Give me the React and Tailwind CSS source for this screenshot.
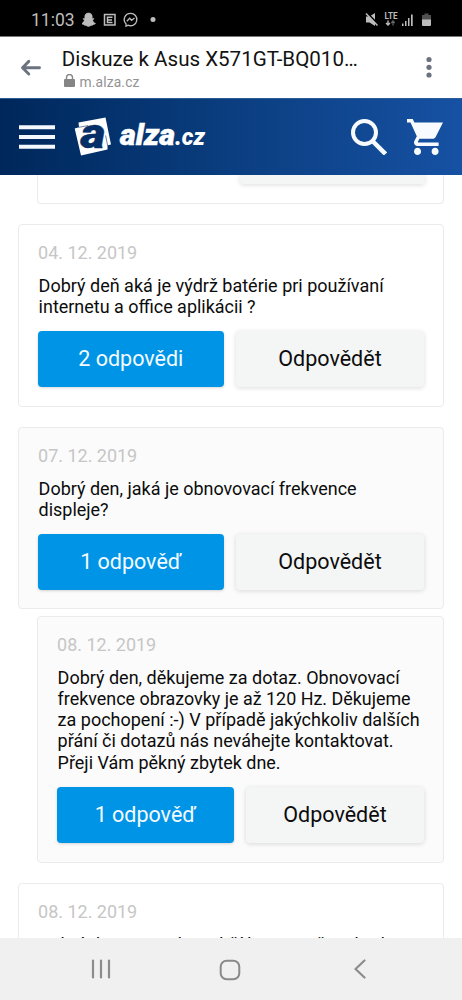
import React from "react";

const cardBase = "box-border rounded border-[1.5px] border-[#ebebeb] pl-[19.5px] pr-[19px]";

function Line({ children, width }) {
  return (
    <svg className="block h-[21.3px] w-full overflow-visible">
      <text x="-0.4" y="16.5" fontSize="18" fill="#0c0c0c" textLength={width} lengthAdjust="spacingAndGlyphs">
        {children}
      </text>
    </svg>
  );
}

function Post({ date, lines, replies, repliesWidth, replyWidth, className }) {
  return (
    <article className={`${cardBase} ${className}`}>
      <time className="-ml-[0.4px] block h-[22px] text-[18px] leading-[21px] tracking-[-0.02px] text-[#c6c6c6]">{date}</time>
      <div className="mt-[10.5px]">
        {lines.map(([text, width]) => (
          <Line key={text} width={width}>{text}</Line>
        ))}
      </div>
      {replies && (
        <div className="-ml-[0.7px] mt-[13.8px] flex justify-between">
          <button className={`h-[56px] rounded bg-[#0094e7] text-[21.5px] text-[#f4fbff] shadow-[0_1px_3px_rgba(0,0,0,0.16)] ${repliesWidth}`}>{replies}</button>
          <button className={`h-[56px] rounded bg-[#f4f5f5] text-[21.5px] text-[#0c0c0c] shadow-[0_1px_5px_rgba(0,0,0,0.14)] ${replyWidth}`}>Odpovědět</button>
        </div>
      )}
    </article>
  );
}

function StatusBar() {
  return (
    <div className="flex h-9 shrink-0 items-center bg-black pl-[31px] pr-[30px] text-[#bdbdbd]">
      <span className="mt-[3px] w-[51px] text-[17.5px] leading-5">11:03</span>
      <svg className="mt-[3px] h-4 w-[75px]" viewBox="0 0 75 16" fill="none">
        <path d="M6.5 1c2.7 0 3.8 1.9 3.7 4v1.8l1.8-.3-1.3 1.8c.5 1.7 1.4 2.7 2.8 3.1-.3.9-1.4 1-2.3 1.1-.3 1-1.2.8-2 .9-.9.2-1.3 1-2.7 1s-1.8-.8-2.7-1c-.8-.1-1.7.1-2-.9-.9-.1-2-.2-2.3-1.1 1.4-.4 2.3-1.4 2.8-3.1L1 6.5l1.8.3V5c-.1-2.1 1-4 3.7-4Z" fill="currentColor" stroke="currentColor" strokeWidth=".6" />
        <path d="M22.5 2.500h10.500v10.500h-10.500zM30.500 5.300h-5v5.200h5M25.500 7.900h4.500" stroke="currentColor" strokeWidth="1.500" />
        <path d="M48.500 1.300a6.200 6.200 0 0 0-4.500 10.500v2.300l2-1a6.200 6.200 0 1 0 2.500-11.800ZM44.800 9.300l2.900-3 1.900 2 2.900-2.200" stroke="currentColor" strokeWidth="1.300" />
        <circle cx="71" cy="7.500" r="2.500" fill="currentColor" />
      </svg>
      <svg className="ml-auto mt-[3px] h-4 w-[67px]" viewBox="0 0 67 16" fill="currentColor">
        <path d="M1 4.500h3.500L10 1v13l-5.500-3.500H1z" />
        <path d="M1.500.5 13.500 12.500" stroke="#000" strokeWidth="1.800" />
        <path d="M1 1.500 12.500 13.500" stroke="currentColor" strokeWidth="1.500" />
        <text x="19.500" y="7" fontSize="8.500" fontWeight="700" textLength="13" lengthAdjust="spacingAndGlyphs">LTE</text>
        <path d="M23 8.500v4.500m-2-2 2 2 2-2" fill="none" stroke="currentColor" strokeWidth="1.400" />
        <path d="M28 13.500v-4.500m-1.700 2 1.700-2 1.700 2" fill="none" stroke="#666" strokeWidth="1.200" />
        <path d="M37 11.500h1.500V14H37zm3-2.500h1.500v5H40zm3-3h1.500v8H43zm3-3.500h1.700V14H46z" />
        <path d="M57 3h2.500V1.500h4V3H66v5h-9z" fill="#505050" />
        <path d="M57 7.500h9v5.500q0 1-1 1h-7q-1 0-1-1z" />
      </svg>
    </div>
  );
}

function BrowserBar() {
  return (
    <div className="flex h-[62px] shrink-0 border-t border-[#777] bg-white">
      <svg className="ml-5 mt-[21px] h-5 w-[22px]" viewBox="0 0 22 20" fill="none" stroke="#6c7380" strokeWidth="2.900" strokeLinecap="round" strokeLinejoin="round">
        <path d="M19.500 9.700H2.800M8.800 3.400l-6.300 6.300 6.300 6.300" />
      </svg>
      <div className="ml-5 mt-[9px] w-[310px]">
        <svg className="block h-[25px] w-full overflow-visible">
          <text x="-0.300" y="20" fontSize="20" fill="#121212" textLength="296" lengthAdjust="spacingAndGlyphs">Diskuze k Asus X571GT-BQ010…</text>
        </svg>
        <div className="flex h-[17px] items-center">
          <svg className="ml-[1.500px] mr-[5px] mt-[2px] h-[13px] w-[11px]" viewBox="0 0 11 13" fill="#858585">
            <path d="M1 5h9q1 0 1 1v6q0 1-1 1H1q-1 0-1-1V6q0-1 1-1Z" />
            <path d="M2.500 6V3.500a3 3 0 0 1 6 0V6" fill="none" stroke="#858585" strokeWidth="1.400" />
          </svg>
          <span className="mt-[4px] text-[13.800px] leading-4 tracking-[0.15px] text-[#929292]">m.alza.cz</span>
        </div>
      </div>
      <svg className="ml-auto mr-[30.500px] mt-[19px] h-[22px] w-[6px]" viewBox="0 0 6 22" fill="#6c7380">
        <circle cx="3" cy="3.500" r="2.600" /><circle cx="3" cy="11.300" r="2.600" /><circle cx="3" cy="19" r="2.600" />
      </svg>
    </div>
  );
}

function SiteHeader() {
  return (
    <header className="flex h-[77px] shrink-0 items-center border-t border-[#2d5b93] bg-linear-to-r from-[#00275b] via-[#0b3e80] to-[#1651a3] pl-[19px] pr-[19px]">
      <svg className="h-[26px] w-9" viewBox="0 0 36 26" fill="#f5f9ff">
        <path d="M0 1.300h36v4H0zM0 11h36v4H0zM0 20.800h36v4H0z" />
      </svg>
      <svg className="ml-[19px] h-10 w-[136px] overflow-visible" viewBox="0 0 136 40" fill="white">
        <path d="M4.500 5.500 31.500.5l5.500 27-3.500.8v4.200L7 38.500.7 11.500l4.300-1.200z" />
        <path d="M4.800 10.300 14 8.600M33.600 28.500l-2-10" stroke="#062f68" strokeWidth=".6" />
        <text x="6.500" y="30.500" fontSize="43" fontWeight="900" fontStyle="italic" fill="#062f68" stroke="#062f68" strokeWidth=".4" textLength="25" lengthAdjust="spacingAndGlyphs">a</text>
        <text x="46" y="28" fontSize="28.500" fontWeight="900" fontStyle="italic" textLength="55" lengthAdjust="spacingAndGlyphs" stroke="white" strokeWidth=".5">alza</text>
        <text x="101" y="28" fontSize="23" fontWeight="900" fontStyle="italic" textLength="30" lengthAdjust="spacingAndGlyphs">.cz</text>
      </svg>
      <svg className="ml-auto h-9 w-9" viewBox="0 0 36 36" fill="none" stroke="#f7fbff">
        <circle cx="13.500" cy="13.500" r="11.500" strokeWidth="4" />
        <path d="M22 22.500 34.500 35" strokeWidth="4.500" />
      </svg>
      <svg className="ml-[20px] h-9 w-9" viewBox="1 2 20.500 20" fill="#f7fbff" preserveAspectRatio="none">
        <path d="M7 18c-1.100 0-1.990.9-1.990 2S5.900 22 7 22s2-.9 2-2-.9-2-2-2zM1 2v2h2l3.600 7.590-1.350 2.450c-.16.280-.25.610-.25.960 0 1.100.9 2 2 2h12v-2H7.420c-.14 0-.25-.110-.25-.250l.03-.120.9-1.630h7.450c.75 0 1.410-.410 1.750-1.030L21.500 4H5.210l-.94-2H1zm16 16c-1.100 0-1.990.9-1.990 2s.89 2 1.990 2 2-.9 2-2-.9-2-2-2z" />
      </svg>
    </header>
  );
}

export default function App() {
  return (
    <div className="flex h-[1000px] w-[462px] flex-col overflow-hidden bg-white font-[Roboto,sans-serif]">
      <StatusBar />
      <BrowserBar />
      <SiteHeader />
      <main className="min-h-0 flex-1 overflow-hidden pl-[18px] pr-[18px]">
        <div className="ml-[19px] h-[29px] rounded-b border-[1.500px] border-t-0 border-[#ebebeb] pr-[18px]">
          <div className="ml-auto h-[9px] w-[185px] rounded-b bg-[#f4f5f5] shadow-[0_1px_5px_rgba(0,0,0,0.14)]" />
        </div>
        <Post
          className="mt-5 h-[183px] pt-[17px]"
          date="04. 12. 2019"
          lines={[["Dobrý deň aká je výdrž batérie pri používaní", 345], ["internetu a office aplikácii ?", 217]]}
          replies="2 odpovědi"
          repliesWidth="w-[186px]"
          replyWidth="w-[188px]"
        />
        <Post
          className="mt-5 h-[182px] bg-[#fbfbfb] pt-[17px]"
          date="07. 12. 2019"
          lines={[["Dobrý den, jaká je obnovovací frekvence", 318], ["displeje?", 70]]}
          replies="1 odpověď"
          repliesWidth="w-[186px]"
          replyWidth="w-[188px]"
        />
        <Post
          className="ml-[19px] mt-[7px] h-[247px] bg-[#fbfbfb] pt-[17px]"
          date="08. 12. 2019"
          lines={[
            ["Dobrý den, děkujeme za dotaz. Obnovovací", 342],
            ["frekvence obrazovky je až 120 Hz. Děkujeme", 353],
            ["za pochopení :-) V případě jakýchkoliv dalších", 362],
            ["přání či dotazů nás neváhejte kontaktovat.", 336],
            ["Přeji Vám pěkný zbytek dne.", 223],
          ]}
          replies="1 odpověď"
          repliesWidth="w-[177px]"
          replyWidth="w-[178px]"
        />
        <Post
          className="mt-5 h-[183px] pt-[17px]"
          date="08. 12. 2019"
          lines={[["Dobrý den, opravdu vydrží baterie až 10 hodin?", 369]]}
        />
      </main>
      <nav className="flex h-[62px] shrink-0 items-center bg-[#f0f0f0] pl-[91px]">
        <svg className="h-5 w-5" viewBox="0 0 20 20" stroke="#8c8c8c" strokeWidth="2.200" strokeLinecap="round">
          <path d="M2 1.500v17M10 1.500v17M18 1.500v17" />
        </svg>
        <svg className="ml-[108px] mt-px h-[22px] w-[22px]" viewBox="0 0 22 22" fill="none" stroke="#898989" strokeWidth="2">
          <rect x="1.700" y="1.700" width="18.600" height="18.600" rx="6" />
        </svg>
        <svg className="ml-[113px] h-5 w-[12px]" viewBox="0 0 12 20" fill="none" stroke="#8c8c8c" strokeWidth="2.200" strokeLinecap="round" strokeLinejoin="round">
          <path d="m10.500 1.500-9 8.500 9 8.500" />
        </svg>
      </nav>
    </div>
  );
}
